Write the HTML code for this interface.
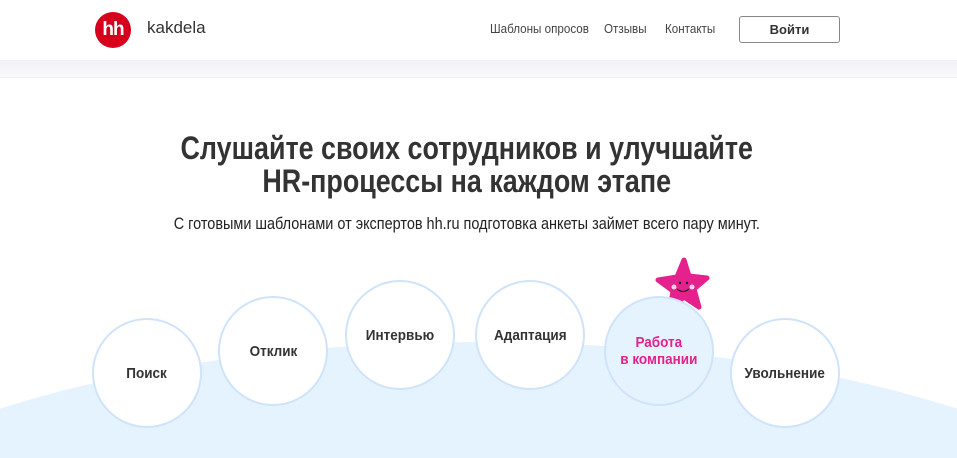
<!DOCTYPE html>
<html><head><meta charset="utf-8"><style>
*{margin:0;padding:0;box-sizing:border-box}
html,body{width:957px;height:458px;overflow:hidden}
body{background:#fff;font-family:"Liberation Sans","DejaVu Sans",sans-serif;position:relative;color:#333}
.clip{position:absolute;left:0;top:0;width:957px;height:458px;overflow:hidden}
.hdr{position:absolute;left:0;top:0;width:957px;height:60px;background:#fff}
.band{position:absolute;left:0;top:60px;width:957px;height:18px;background:linear-gradient(#f1f0f6,#fafafc);border-bottom:1px solid #f0f0f4}
.logo{position:absolute;left:95px;top:12px;width:36px;height:36px;border-radius:50%;background:#d6001c;color:#fff;font-weight:bold;font-size:19px;text-align:center;line-height:35px;letter-spacing:-1px}
.brand{position:absolute;left:147px;top:18px;font-size:17px;color:#333}
.nav{position:absolute;top:22px;font-size:12.5px;color:#444;white-space:nowrap;transform:scaleX(0.93);transform-origin:left}
.btn{position:absolute;left:739px;top:16px;width:101px;height:27px;border:1px solid #888;border-radius:3px;text-align:center;line-height:25px;font-size:13px;font-weight:bold;color:#333}
.t{position:absolute;left:0;width:933px;text-align:center}
.t span{display:inline-block;white-space:nowrap}
h1.t{top:132px;font-weight:bold;font-size:32px;line-height:33px;color:#333}
h1.t span{transform:scaleX(0.84)}
.sub{top:214px;font-size:17px;color:#222}
.sub span{transform:scaleX(0.85)}
.arc{position:absolute;left:-260px;top:342px;width:1477px;height:560px;border-radius:50%;background:#e5f3fe}
.c{position:absolute;width:110px;height:110px;border-radius:50%;border:2px solid #cfe3fa;background:#fff;display:flex;align-items:center;justify-content:center;text-align:center;font-weight:bold;font-size:15px;color:#333;line-height:17px}
.c span{display:inline-block;transform:scaleX(0.9);white-space:nowrap}
.c.a{background:#e5f3fe;color:#e4218d}
</style></head><body>
<div class="clip">
<div class="arc"></div>
<div class="hdr"></div>
<div class="band"></div>
<div class="logo">hh</div>
<div class="brand">kakdela</div>
<div class="nav" style="left:490px">Шаблоны опросов</div>
<div class="nav" style="left:604px">Отзывы</div>
<div class="nav" style="left:665px">Контакты</div>
<div class="btn">Войти</div>
<h1 class="t"><span>Слушайте своих сотрудников и улучшайте<br>HR-процессы на каждом этапе</span></h1>
<div class="t sub"><span>С готовыми шаблонами от экспертов hh.ru подготовка анкеты займет всего пару минут.</span></div>
<svg style="position:absolute;left:652px;top:257px" width="58" height="58" viewBox="0 0 58 58">
<path d="M32 3 L37 19 L55 21 L42 32 L47 50 L32 40 L18 52 L21 34 L6 23 L25 20 Z" fill="#e4218d" stroke="#e4218d" stroke-width="5" stroke-linejoin="round"/>
<circle cx="22" cy="30" r="2.5" fill="#fbd2e8"/><circle cx="40" cy="30" r="2.5" fill="#fbd2e8"/>
<circle cx="28" cy="26" r="1.2" fill="#222"/><circle cx="35" cy="26" r="1.2" fill="#222"/>
<path d="M25 32 Q31 37 37 32" stroke="#222" stroke-width="1.2" fill="none"/>
</svg>
<div class="c" style="left:92px;top:318px"><span>Поиск</span></div>
<div class="c" style="left:218px;top:296px"><span>Отклик</span></div>
<div class="c" style="left:345px;top:280px"><span>Интервью</span></div>
<div class="c" style="left:475px;top:280px"><span>Адаптация</span></div>
<div class="c a" style="left:604px;top:296px"><span>Работа<br>в компании</span></div>
<div class="c" style="left:730px;top:318px"><span>Увольнение</span></div>
</div>
</body></html>
